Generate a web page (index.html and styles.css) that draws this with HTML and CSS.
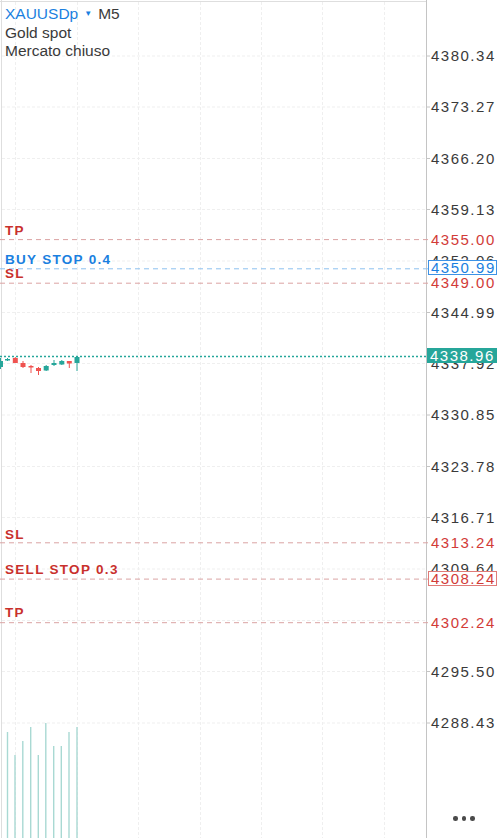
FILE: index.html
```html
<!DOCTYPE html>
<html lang="it">
<head>
<meta charset="utf-8">
<title>XAUUSDp M5</title>
<link rel="stylesheet" href="styles.css">
</head>
<body>
<div class="chart">
  <svg class="plot" width="500" height="838" viewBox="0 0 500 838">
    <line class="frame" x1="0" y1="1.5" x2="426" y2="1.5"/>
    <line class="frame" x1="1.5" y1="0" x2="1.5" y2="838"/>
    <g class="grid">
      <line x1="15.5" y1="2" x2="15.5" y2="838"/>
      <line x1="77.5" y1="2" x2="77.5" y2="838"/>
      <line x1="138.5" y1="2" x2="138.5" y2="838"/>
      <line x1="200.5" y1="2" x2="200.5" y2="838"/>
      <line x1="261.5" y1="2" x2="261.5" y2="838"/>
      <line x1="322.5" y1="2" x2="322.5" y2="838"/>
      <line x1="384.5" y1="2" x2="384.5" y2="838"/>
      <line x1="2" y1="56" x2="426" y2="56"/>
      <line x1="2" y1="107" x2="426" y2="107"/>
      <line x1="2" y1="158.5" x2="426" y2="158.5"/>
      <line x1="2" y1="209.5" x2="426" y2="209.5"/>
      <line x1="2" y1="261" x2="426" y2="261"/>
      <line x1="2" y1="312.5" x2="426" y2="312.5"/>
      <line x1="2" y1="363.5" x2="426" y2="363.5"/>
      <line x1="2" y1="415" x2="426" y2="415"/>
      <line x1="2" y1="466.5" x2="426" y2="466.5"/>
      <line x1="2" y1="517.5" x2="426" y2="517.5"/>
      <line x1="2" y1="569" x2="426" y2="569"/>
      <line x1="2" y1="620.5" x2="426" y2="620.5"/>
      <line x1="2" y1="671.5" x2="426" y2="671.5"/>
      <line x1="2" y1="723" x2="426" y2="723"/>
    </g>
    <line class="axis" x1="426.5" y1="0" x2="426.5" y2="838"/>
    <g class="ticks">
      <line x1="426" y1="56" x2="430" y2="56"/>
      <line x1="426" y1="107" x2="430" y2="107"/>
      <line x1="426" y1="158.5" x2="430" y2="158.5"/>
      <line x1="426" y1="209.5" x2="430" y2="209.5"/>
      <line x1="426" y1="312.5" x2="430" y2="312.5"/>
      <line x1="426" y1="415" x2="430" y2="415"/>
      <line x1="426" y1="466.5" x2="430" y2="466.5"/>
      <line x1="426" y1="517.5" x2="430" y2="517.5"/>
      <line x1="426" y1="671.5" x2="430" y2="671.5"/>
      <line x1="426" y1="723" x2="430" y2="723"/>
    </g>
    <g class="volume">
      <line x1="7.5" y1="732" x2="7.5" y2="838"/>
      <line x1="15" y1="755" x2="15" y2="838"/>
      <line x1="22.8" y1="741" x2="22.8" y2="838"/>
      <line x1="30.7" y1="727" x2="30.7" y2="838"/>
      <line x1="38.3" y1="755" x2="38.3" y2="838"/>
      <line x1="45.8" y1="723" x2="45.8" y2="838"/>
      <line x1="53.7" y1="746" x2="53.7" y2="838"/>
      <line x1="61.3" y1="746" x2="61.3" y2="838"/>
      <line x1="69" y1="732" x2="69" y2="838"/>
      <line x1="77" y1="727" x2="77" y2="838"/>
    </g>
    <line class="ord red" x1="0" y1="239.6" x2="428" y2="239.6"/>
    <line class="ord blue" x1="0" y1="268.8" x2="428" y2="268.8"/>
    <line class="ord red" x1="0" y1="283.2" x2="428" y2="283.2"/>
    <line class="ord red" x1="0" y1="542.8" x2="428" y2="542.8"/>
    <line class="ord red" x1="0" y1="579.1" x2="428" y2="579.1"/>
    <line class="ord red" x1="0" y1="622.7" x2="428" y2="622.7"/>
    <line class="last" x1="0" y1="356.5" x2="428" y2="356.5"/>
    <g class="candles">
      <g class="up"><line x1="0.5" y1="358" x2="0.5" y2="369"/><rect x="-2" y="361" width="5" height="6"/></g>
      <g class="up"><line x1="7.5" y1="358" x2="7.5" y2="361"/><rect x="5" y="359" width="5" height="1.5"/></g>
      <g class="dn"><line x1="15.3" y1="357" x2="15.3" y2="363"/><rect x="12.8" y="358" width="5" height="5"/></g>
      <g class="dn"><line x1="23" y1="361" x2="23" y2="368"/><rect x="20.5" y="363" width="5" height="4"/></g>
      <g class="dn"><line x1="31" y1="365" x2="31" y2="373"/><rect x="28.5" y="366" width="5" height="1.5"/></g>
      <g class="dn"><line x1="38.5" y1="367" x2="38.5" y2="375"/><rect x="36" y="368" width="5" height="3"/></g>
      <g class="up"><line x1="46.2" y1="365" x2="46.2" y2="371"/><rect x="43.7" y="366" width="5" height="4.5"/></g>
      <g class="up"><line x1="54" y1="360" x2="54" y2="366"/><rect x="51.5" y="363" width="5" height="2"/></g>
      <g class="up"><line x1="61.8" y1="360" x2="61.8" y2="365"/><rect x="59.3" y="361" width="5" height="3.5"/></g>
      <g class="dn"><line x1="69.3" y1="361" x2="69.3" y2="368"/><rect x="66.8" y="361" width="5" height="2.5"/></g>
      <g class="up"><line x1="77" y1="356" x2="77" y2="371"/><rect x="74.5" y="357" width="5" height="6"/></g>
    </g>
  </svg>

  <header class="symbol">
    <div class="symbol-row">
      <span class="ticker">XAUUSDp</span>
      <span class="caret">▼</span>
      <span class="tf">M5</span>
    </div>
    <div class="desc">Gold spot</div>
    <div class="desc">Mercato chiuso</div>
  </header>

  <div class="price-axis">
    <div class="tick" style="top:47px">4380.34</div>
    <div class="tick" style="top:98px">4373.27</div>
    <div class="tick" style="top:149.5px">4366.20</div>
    <div class="tick" style="top:200.5px">4359.13</div>
    <div class="tick" style="top:252px">4352.06</div>
    <div class="tick" style="top:303.5px">4344.99</div>
    <div class="tick" style="top:354.5px">4337.92</div>
    <div class="tick" style="top:406px">4330.85</div>
    <div class="tick" style="top:457.5px">4323.78</div>
    <div class="tick" style="top:508.5px">4316.71</div>
    <div class="tick" style="top:560px">4309.64</div>
    <div class="tick" style="top:662.5px">4295.50</div>
    <div class="tick" style="top:714px">4288.43</div>

    <div class="tick level red" style="top:230.6px">4355.00</div>
    <div class="tick level red" style="top:274.2px">4349.00</div>
    <div class="tick level red" style="top:533.8px">4313.24</div>
    <div class="tick level red" style="top:613.7px">4302.24</div>

    <div class="tag tag-blue" style="top:260px">4350.99</div>
    <div class="tag tag-red" style="top:571px">4308.24</div>
    <div class="tag tag-last" style="top:348px">4338.96</div>
  </div>

  <div class="order-labels">
    <div class="olabel red" style="top:222.6px">TP</div>
    <div class="olabel blue" style="top:251.8px">BUY STOP 0.4</div>
    <div class="olabel red" style="top:266.2px">SL</div>
    <div class="olabel red" style="top:526.8px">SL</div>
    <div class="olabel red" style="top:562.1px">SELL STOP 0.3</div>
    <div class="olabel red" style="top:604.7px">TP</div>
  </div>

  <div class="more" aria-label="Altro"><span></span><span></span><span></span></div>
</div>
</body>
</html>
```

FILE: styles.css
```css
* { box-sizing: border-box; }

html, body {
  margin: 0;
  padding: 0;
  background: #ffffff;
}

body {
  width: 500px;
  height: 838px;
  overflow: hidden;
  font-family: "Liberation Sans", Arial, sans-serif;
}

.chart {
  position: relative;
  width: 500px;
  height: 838px;
}

.plot {
  display: block;
}

.frame {
  stroke: #dedede;
  stroke-width: 1;
}

.grid line {
  stroke: #efefef;
  stroke-width: 1;
  stroke-dasharray: 3 2;
}

.axis {
  stroke: #c4c4c4;
  stroke-width: 1;
}

.ticks line {
  stroke: #c4c4c4;
  stroke-width: 1;
}

.volume line {
  stroke: #a9d9d3;
  stroke-width: 1.4;
}

.ord {
  stroke-width: 1;
  stroke-dasharray: 5 4;
}
.ord.red { stroke: #dba3a3; }
.ord.blue { stroke: #8cc0ef; }

.last {
  stroke: #26a69a;
  stroke-width: 1.5;
  stroke-dasharray: 2 2;
}

.candles .up line { stroke: #26a69a; stroke-width: 1; }
.candles .up rect { fill: #26a69a; }
.candles .dn line { stroke: #ef5350; stroke-width: 1; }
.candles .dn rect { fill: #ef5350; }

/* header */
.symbol {
  position: absolute;
  left: 5px;
  top: 5px;
  font-size: 15.5px;
  line-height: 18.5px;
  color: #3a3a3a;
}

.symbol-row {
  display: flex;
  align-items: center;
  gap: 6px;
}

.ticker {
  color: #1a7fe0;
}

.caret {
  color: #1a7fe0;
  font-size: 8px;
  line-height: 18px;
}

.tf {
  color: #3a3a3a;
}

.desc {
  color: #3a3a3a;
}

/* price axis */
.price-axis {
  position: absolute;
  left: 0;
  top: 0;
  width: 500px;
  height: 838px;
  pointer-events: none;
}

.tick {
  position: absolute;
  left: 431px;
  font-size: 15px;
  line-height: 18px;
  letter-spacing: 1.5px;
  color: #3a3a3a;
  white-space: nowrap;
}

.tick.level {
  left: 428px;
  padding-left: 3px;
  width: 70px;
  background: #ffffff;
}

.tick.red { color: #d23b38; }

.tag {
  position: absolute;
  left: 428px;
  width: 69px;
  height: 15px;
  padding-left: 2px;
  font-size: 15px;
  line-height: 13px;
  letter-spacing: 1.5px;
  white-space: nowrap;
  background: #ffffff;
  border: 1px solid;
}

.tag-blue {
  color: #1a7fe0;
  border-color: #3d92e6;
}

.tag-red {
  color: #d23b38;
  border-color: #e07b78;
}

.tag-last {
  left: 427px;
  width: 70px;
  padding-left: 3px;
  line-height: 15px;
  border: none;
  background: #26a69a;
  color: #ffffff;
}

/* order labels */
.order-labels {
  position: absolute;
  left: 0;
  top: 0;
  width: 426px;
  height: 838px;
  pointer-events: none;
}

.olabel {
  position: absolute;
  left: 5px;
  font-size: 13.5px;
  line-height: 16px;
  font-weight: bold;
  letter-spacing: 1.3px;
  white-space: nowrap;
}

.olabel.red { color: #c9302c; }
.olabel.blue { color: #1a7fe0; }

/* more button */
.more {
  position: absolute;
  left: 453px;
  top: 816px;
  display: flex;
  gap: 4px;
}

.more span {
  width: 4.5px;
  height: 4.5px;
  border-radius: 50%;
  background: #4a4a4a;
}
```
